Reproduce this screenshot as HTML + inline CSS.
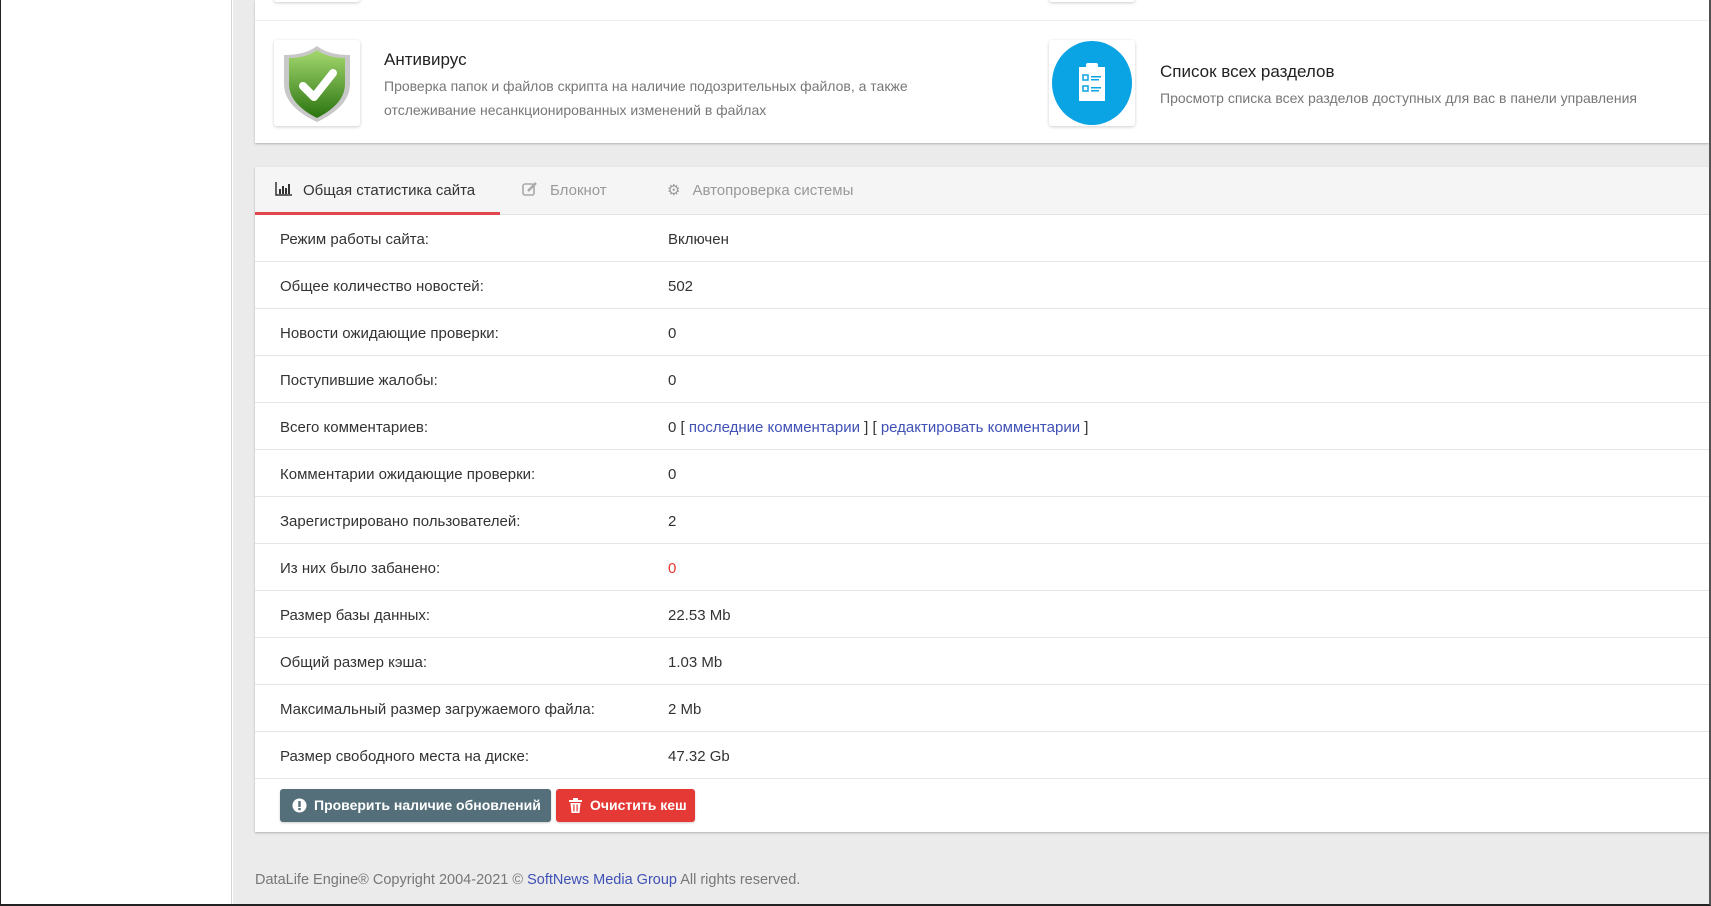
<!DOCTYPE html>
<html><head><meta charset="utf-8"><style>
*{box-sizing:border-box;margin:0;padding:0}
html,body{width:1711px;height:906px;overflow:hidden;background:#fff;font-family:"Liberation Sans",sans-serif;color:#333}
.frame{position:absolute;left:0;top:0;width:1711px;height:906px;border-left:1px solid #222;border-bottom:2px solid #222;border-right:2px solid #555}
.side{position:absolute;left:1px;top:0;width:231px;height:904px;background:#fff;border-right:1px solid #d5d5d5}
.main{position:absolute;left:233px;top:0;width:1476px;height:904px;background:#ebebeb}
.p1{position:absolute;left:22px;top:0;width:1454px;height:143px;background:#fff;box-shadow:0 1px 2px rgba(0,0,0,.25)}
.p1 .div{position:absolute;left:0;right:0;top:20px;border-top:1px solid #eee}
.ib{position:absolute;width:86px;height:86px;background:#fff;border-radius:3px;box-shadow:0 1px 3px rgba(0,0,0,.2)}
.t{position:absolute;font-size:17px;color:#222}
.d{position:absolute;font-size:14px;color:#777;line-height:24px}
.p2{position:absolute;left:22px;top:167px;width:1454px;height:665px;background:#fff;box-shadow:0 1px 2px rgba(0,0,0,.25)}
.tabs{height:48px;background:#f5f5f5;border-bottom:1px solid #e2e2e2;position:relative;font-size:15px}
.tab{position:absolute;top:0;height:48px;line-height:48px;color:#999}
.tab.a{color:#333}
.ul{position:absolute;left:0;top:45px;width:245px;height:3px;background:#e0474c}
.row{height:47px;border-bottom:1px solid #e6e6e6;position:relative;font-size:15px;line-height:50px}
.row .l{position:absolute;left:25px}
.row .v{position:absolute;left:413px}
a{color:#3f51b5;text-decoration:none}
.btn{position:absolute;top:622px;height:33px;line-height:33px;color:#fff;font-size:14px;font-weight:bold;border-radius:3px;padding-left:34px;box-shadow:0 1px 2px rgba(0,0,0,.2)}
.foot{position:absolute;left:22px;top:872px;font-size:14.5px;color:#777}
</style></head><body>
<div class="frame"></div>
<div class="side"></div>
<div class="main">
 <div class="p1">
  <div class="ib" style="left:19px;top:-20px;height:22px"></div>
  <div class="ib" style="left:794px;top:-20px;height:22px"></div>
  <div class="div"></div>
  <div class="ib" style="left:19px;top:40px">
   <svg width="86" height="86" viewBox="0 0 86 86"><defs><linearGradient id="g" x1="0" y1="0" x2="0" y2="1"><stop offset="0" stop-color="#a5d86f"/><stop offset="1" stop-color="#2a7410"/></linearGradient></defs>
   <path d="M43 6 C34 13 22 15 10 15 L10 44 C10 62 26 74 43 82 C60 74 76 62 76 44 L76 15 C64 15 52 13 43 6Z" fill="#c8c8c8"/>
   <path d="M43 10 C35 16 25 18 15 18 L15 44 C15 60 29 71 43 78 C57 71 71 60 71 44 L71 18 C61 18 51 16 43 10Z" fill="url(#g)"/>
   <path d="M29 46 L40 57 L59 33" stroke="#fff" stroke-width="8" fill="none" stroke-linecap="round" stroke-linejoin="round"/></svg>
  </div>
  <div class="t" style="left:129px;top:50px">Антивирус</div>
  <div class="d" style="left:129px;top:74px">Проверка папок и файлов скрипта на наличие подозрительных файлов, а также<br>отслеживание несанкционированных изменений в файлах</div>
  <div class="ib" style="left:794px;top:40px">
   <svg width="86" height="86" viewBox="0 0 86 86"><ellipse cx="43" cy="43" rx="40" ry="42" fill="#0aa3e3"/>
   <rect x="30" y="27" width="26" height="34" fill="#fff"/><rect x="37" y="23" width="12" height="7" rx="2" fill="#fff"/>
   <rect x="34" y="35" width="5" height="5" fill="none" stroke="#0aa3e3" stroke-width="1.5"/><rect x="42" y="36" width="10" height="1.5" fill="#0aa3e3"/><rect x="42" y="39" width="8" height="1.5" fill="#0aa3e3"/>
   <rect x="34" y="46" width="5" height="5" fill="none" stroke="#0aa3e3" stroke-width="1.5"/><rect x="42" y="47" width="10" height="1.5" fill="#0aa3e3"/><rect x="42" y="50" width="8" height="1.5" fill="#0aa3e3"/></svg>
  </div>
  <div class="t" style="left:905px;top:62px">Список всех разделов</div>
  <div class="d" style="left:905px;top:86px">Просмотр списка всех разделов доступных для вас в панели управления</div>
 </div>
 <div class="p2">
  <div class="tabs">
   <div class="tab a" style="left:20px"><svg width="18" height="14" viewBox="0 0 18 14" style="vertical-align:-1px;margin-right:10px"><path d="M1 0V13H17" stroke="#333" stroke-width="1.5" fill="none"/><rect x="4" y="7" width="2" height="5" fill="#333"/><rect x="7" y="4" width="2" height="8" fill="#333"/><rect x="10" y="6" width="2" height="6" fill="#333"/><rect x="13" y="2" width="2" height="10" fill="#333"/></svg>Общая статистика сайта</div>
   <div class="tab" style="left:267px"><svg width="16" height="14" viewBox="0 0 16 14" style="vertical-align:-1px;margin-right:12px"><rect x="1" y="2" width="11" height="11" rx="2" fill="none" stroke="#aaa" stroke-width="1.6"/><path d="M6 9 L14 1" stroke="#aaa" stroke-width="2.5"/></svg>Блокнот</div>
   <div class="tab" style="left:412px"><span style="color:#999;margin-right:12px;font-size:15px">⚙</span>Автопроверка системы</div>
   <div class="ul"></div>
  </div>
  <div class="row"><span class="l">Режим работы сайта:</span><span class="v">Включен</span></div>
  <div class="row"><span class="l">Общее количество новостей:</span><span class="v">502</span></div>
  <div class="row"><span class="l">Новости ожидающие проверки:</span><span class="v">0</span></div>
  <div class="row"><span class="l">Поступившие жалобы:</span><span class="v">0</span></div>
  <div class="row"><span class="l">Всего комментариев:</span><span class="v">0 [ <a>последние комментарии</a> ] [ <a>редактировать комментарии</a> ]</span></div>
  <div class="row"><span class="l">Комментарии ожидающие проверки:</span><span class="v">0</span></div>
  <div class="row"><span class="l">Зарегистрировано пользователей:</span><span class="v">2</span></div>
  <div class="row"><span class="l">Из них было забанено:</span><span class="v" style="color:#e53935">0</span></div>
  <div class="row"><span class="l">Размер базы данных:</span><span class="v">22.53 Mb</span></div>
  <div class="row"><span class="l">Общий размер кэша:</span><span class="v">1.03 Mb</span></div>
  <div class="row"><span class="l">Максимальный размер загружаемого файла:</span><span class="v">2 Mb</span></div>
  <div class="row"><span class="l">Размер свободного места на диске:</span><span class="v">47.32 Gb</span></div>
  <div class="btn" style="left:25px;width:271px;background:#546e7a"><svg width="15" height="15" viewBox="0 0 15 15" style="position:absolute;left:12px;top:9px"><circle cx="7.5" cy="7.5" r="7" fill="#fff"/><rect x="6.3" y="3" width="2.4" height="6" fill="#546e7a"/><rect x="6.3" y="10" width="2.4" height="2.2" fill="#546e7a"/></svg>Проверить наличие обновлений</div>
  <div class="btn" style="left:301px;width:139px;background:#e53935"><svg width="13" height="15" viewBox="0 0 13 15" style="position:absolute;left:13px;top:9px"><rect x="0" y="2" width="13" height="2" fill="#fff"/><rect x="4" y="0" width="5" height="2" fill="#fff"/><path d="M1.5 5H11.5L10.5 15H2.5Z" fill="#fff"/><rect x="4.3" y="6.5" width="1.2" height="7" fill="#e53935"/><rect x="7.5" y="6.5" width="1.2" height="7" fill="#e53935"/></svg>Очистить кеш</div>
 </div>
 <div class="foot">DataLife Engine® Copyright 2004-2021 © <a>SoftNews Media Group</a> All rights reserved.</div>
</div>
</body></html>
